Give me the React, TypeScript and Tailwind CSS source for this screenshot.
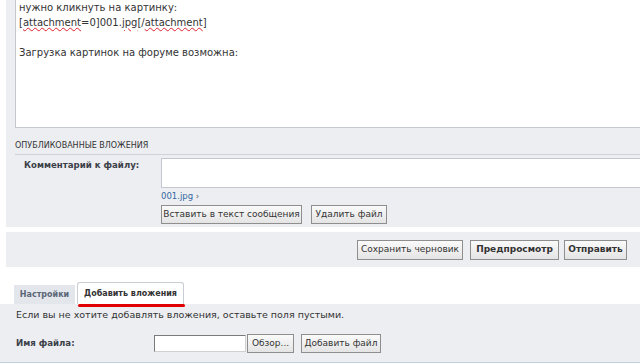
import type { ReactNode } from 'react';

function Btn({ children, bold, className = '' }: { children: ReactNode; bold?: boolean; className?: string }) {
  return (
    <button
      className={`flex h-[19px] items-center justify-center whitespace-nowrap border border-[#8e8e8e] bg-gradient-to-b from-[#fafafa] to-[#e4e4e4] px-0 text-[9px] text-[#333] ${bold ? 'font-bold' : ''} ${className}`}
    >
      {children}
    </button>
  );
}

export default function App() {
  return (
    <div className="h-[363px] w-[640px] overflow-hidden bg-white font-['DejaVu_Sans',sans-serif] text-[#333]">
      {/* post body */}
      <div className="ml-[6px] bg-[#eceef2] pb-[3px] pl-[9px]">
        <div className="h-[128px] border-b border-l border-[#c4c8ce] bg-white pl-[3px] text-[10px] leading-[15px] text-[#333]">
          <div>нужно кликнуть на картинку:</div>
          <div>
            [<span className="underline decoration-wavy decoration-[#d23] decoration-1">attachment</span>=0]001.
            <span className="underline decoration-wavy decoration-[#d23] decoration-1">jpg</span>[/
            <span className="underline decoration-wavy decoration-[#d23] decoration-1">attachment</span>]
          </div>
          <div className="h-[15px]" />
          <div>Загрузка картинок на форуме возможна:</div>
        </div>

        <div className="mt-[13px] border-b border-[#cfd3d9] pb-[3px] text-[8px] uppercase leading-[10px] text-[#333]">
          Опубликованные вложения
        </div>

        <div className="mt-[3px] flex">
          <div className="w-[146px] shrink-0 pl-[9px] pt-[1px] text-[8.6px] font-bold text-[#3b4048]">
            Комментарий к файлу:
          </div>
          <div className="flex-1">
            <div className="h-[30px] border border-r-0 border-[#c4c8ce] bg-white" />
            <div className="mt-[1px] text-[8.5px] leading-[14px] text-[#3567a0]">
              001.jpg <span className="text-[#555]">&rsaquo;</span>
            </div>
            <div className="mt-[2px] flex gap-[9px]">
              <Btn className="w-[141px]">Вставить в текст сообщения</Btn>
              <Btn className="w-[76px]">Удалить файл</Btn>
            </div>
          </div>
        </div>
      </div>

      {/* submit bar */}
      <div className="ml-[6px] mt-[5px] flex h-[35px] items-center justify-end gap-[5px] bg-[#eceef2] pr-[13px]">
        <Btn className="mr-[2px] h-[20px] w-[106px]">Сохранить черновик</Btn>
        <Btn bold className="h-[20px] w-[89px]">Предпросмотр</Btn>
        <Btn bold className="h-[20px] w-[63px]">Отправить</Btn>
      </div>

      {/* tabs */}
      <div className="mt-[15px] flex items-end gap-[2px] pl-[14px]">
        <div className="flex h-[19px] w-[61px] items-center justify-center bg-[#e3e6eb] text-[8px] font-bold text-[#5b6677]">
          Настройки
        </div>
        <div className="relative flex h-[22px] w-[107px] items-center justify-center rounded-t-[3px] border border-b-0 border-[#c8ccd3] bg-white text-[8px] font-bold text-[#333]">
          Добавить вложения
          <span className="absolute bottom-[-3px] left-0 h-[3px] w-[107px] rounded-full bg-[#e00000]" />
        </div>
      </div>

      {/* attachments panel */}
      <div className="h-[60px] border-b-2 border-[#c3cedc] bg-[#eceef2] pl-[16px] pt-[4px]">
        <div className="text-[9.5px] leading-[13px] text-[#333]">
          Если вы не хотите добавлять вложения, оставьте поля пустыми.
        </div>
        <div className="mt-[13px] flex items-center">
          <div className="w-[138px] text-[8.6px] font-bold text-[#3b4048]">Имя файла:</div>
          <div className="h-[17px] w-[92px] border border-[#7a7a7a] border-b-[#d0d0d0] border-r-[#d0d0d0] bg-white" />
          <Btn className="ml-[1px] h-[18px] w-[47px] text-[8px]">Обзор...</Btn>
          <Btn className="ml-[7px] w-[80px]">Добавить файл</Btn>
        </div>
      </div>
    </div>
  );
}
